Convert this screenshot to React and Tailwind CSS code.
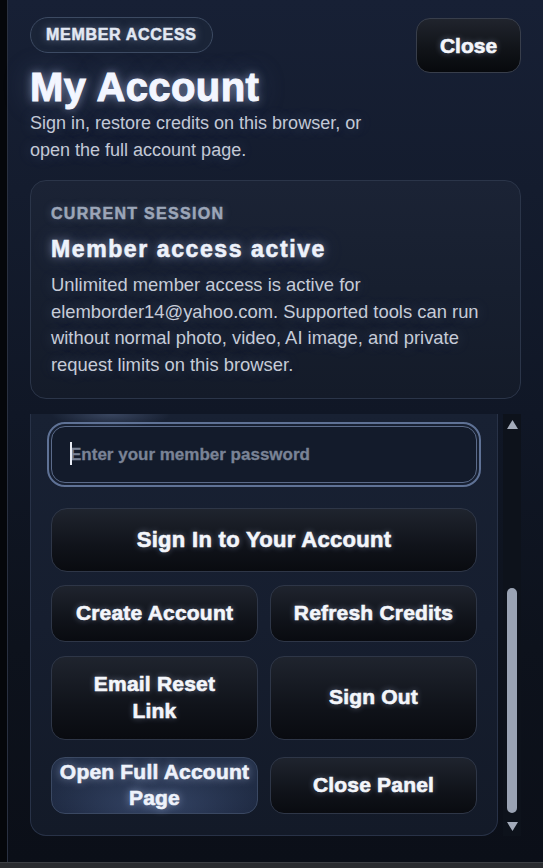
import React from "react";

const font = { fontFamily: '"Liberation Sans", Arial, sans-serif' };

function GridButton({ children, className = "" }) {
  return (
    <button
      className={
        "flex items-center justify-center rounded-[14px] border border-[#2e3647] bg-[linear-gradient(180deg,#1f242e_0%,#10131a_60%,#090b10_100%)] text-center text-[21px] font-bold leading-[1.27] tracking-[0.2px] text-[#f4f6fb] [-webkit-text-stroke:0.6px_#f4f6fb] [text-shadow:0_0_6px_rgba(200,215,255,0.45)] " +
        className
      }
    >
      {children}
    </button>
  );
}

export default function App() {
  return (
    <div style={font} className="flex h-[868px] w-[543px] flex-col overflow-hidden bg-black">
      <div className="flex h-[862px] w-full">
        <div className="h-full w-[7px] shrink-0 bg-[#05070b]" />
        <div className="flex h-full flex-1 flex-col border-l border-[#293040] bg-[linear-gradient(180deg,#172035_0%,#141c2e_22%,#101726_48%,#0d121c_75%,#0b0f18_100%)] pl-[22px] pr-[22px] pt-[17px]">
          {/* Header */}
          <div className="flex items-start justify-between">
            <div className="flex flex-col items-start">
              <div className="inline-flex h-[36px] items-center rounded-full border border-[#3c4a62] bg-[#1d2739]/70 px-[15px] text-[16px] font-bold tracking-[0.7px] text-[#e2e8f3] [-webkit-text-stroke:0.5px_#e2e8f3] [text-shadow:0_0_8px_rgba(200,215,255,0.5)]">
                MEMBER ACCESS
              </div>
              <h1 className="mt-[14px] text-[40px] font-bold leading-[40px] tracking-[0.4px] text-[#f3f6ff] [-webkit-text-stroke:1px_#f3f6ff] [text-shadow:0_0_10px_rgba(200,215,255,0.6),0_0_28px_rgba(150,170,220,0.35)]">
                My Account
              </h1>
              <p className="mt-[3px] w-[360px] text-[18px] leading-[27px] text-[#c3c9d6] [text-shadow:0_0_14px_rgba(150,170,220,0.3)]">
                Sign in, restore credits on this browser, or open the full account page.
              </p>
            </div>
            <button className="mt-[1px] flex h-[55px] w-[105px] items-center justify-center rounded-[14px] border border-[#383e4b] bg-[linear-gradient(180deg,#20242d_0%,#111419_55%,#07090d_100%)] text-[21px] font-bold text-[#f4f6fb] [-webkit-text-stroke:0.6px_#f4f6fb] [text-shadow:0_0_6px_rgba(200,215,255,0.45)]">
              Close
            </button>
          </div>

          {/* Session card */}
          <div className="mt-[16px] rounded-[16px] border border-[#2b3549] bg-[linear-gradient(180deg,#1b2335_0%,#171f2f_50%,#141b29_100%)] px-[20px] pb-[19px] pt-[23px]">
            <div className="text-[16px] font-bold uppercase leading-[20px] tracking-[1.3px] text-[#9ca6b8] [-webkit-text-stroke:0.5px_#9ca6b8] [text-shadow:0_0_8px_rgba(180,200,240,0.35)]">
              Current Session
            </div>
            <div className="mt-[11px] text-[23px] font-bold leading-[28px] tracking-[1.6px] text-[#eef2fb] [-webkit-text-stroke:0.6px_#eef2fb] [text-shadow:0_0_8px_rgba(200,215,255,0.55),0_0_22px_rgba(150,170,220,0.3)]">
              Member access active
            </div>
            <p className="mt-[9px] text-[18.4px] leading-[26.7px] text-[#c6ccd8] [text-shadow:0_0_14px_rgba(150,170,220,0.3)]">
              Unlimited member access is active for elemborder14@yahoo.com. Supported tools can run without normal photo, video, AI image, and private request limits on this browser.
            </p>
          </div>

          {/* Scroll area */}
          <div className="mt-[15px] flex h-[422px] items-stretch">
            <div className="h-full w-[468px] shrink-0 overflow-hidden">
              <div className="flex h-full flex-col rounded-b-[16px] border-x border-b border-[#283247] bg-[radial-gradient(ellipse_60px_14px_at_80px_0px,rgba(120,140,180,0.35),transparent),linear-gradient(180deg,#182133_0%,#161e2f_50%,#131a28_100%)] px-[20px]">
                <div className="relative mt-[12px] flex h-[57px] items-center rounded-[14px] border-[1.5px] border-[#5b6b8a] bg-[#131b2b] pl-[18px] outline-2 outline-offset-2 outline-[#5f7296]">
                  <span className="absolute left-[18px] top-[15px] h-[23px] w-[1.5px] bg-[#e8ecf5]" />
                  <span className="text-[17px] font-bold text-[#7a8396] [-webkit-text-stroke:0.3px_#7a8396]">Enter your member password</span>
                </div>
                <button className="mt-[25px] flex h-[64px] w-full items-center justify-center rounded-[16px] border border-[#2e3647] bg-[linear-gradient(180deg,#1f242e_0%,#10131a_60%,#090b10_100%)] text-[22px] font-bold tracking-[0.3px] text-[#f4f6fb] [-webkit-text-stroke:0.6px_#f4f6fb] [text-shadow:0_0_6px_rgba(200,215,255,0.45)]">
                  Sign In to Your Account
                </button>
                <div className="mt-[13px] grid grid-cols-2 gap-x-[12px]">
                  <GridButton className="h-[57px] px-2">Create Account</GridButton>
                  <GridButton className="h-[57px] px-2">Refresh Credits</GridButton>
                </div>
                <div className="mt-[14px] grid grid-cols-2 gap-x-[12px]">
                  <GridButton className="h-[84px] px-[30px]">Email Reset Link</GridButton>
                  <GridButton className="h-[84px] px-2">Sign Out</GridButton>
                </div>
                <div className="mt-[17px] grid grid-cols-2 gap-x-[12px]">
                  <button className="flex h-[57px] items-center justify-center rounded-[14px] border border-[#3a4862] bg-[radial-gradient(ellipse_110px_40px_at_50%_85%,rgba(70,90,130,0.55),transparent),linear-gradient(180deg,#24314a_0%,#1d2840_100%)] px-[6px] text-center text-[21px] font-bold leading-[1.27] tracking-[0.2px] text-[#eef2fb] [-webkit-text-stroke:0.6px_#eef2fb] [text-shadow:0_0_8px_rgba(200,215,255,0.65)]">
                    Open Full Account Page
                  </button>
                  <GridButton className="h-[57px] px-2">Close Panel</GridButton>
                </div>
              </div>
            </div>
            <div className="w-[5px] shrink-0" />
            <div className="flex h-full w-[18px] shrink-0 flex-col items-center bg-[#0d121b] pb-[5px] pt-[6px]">
              <svg width="11" height="9" viewBox="0 0 11 9">
                <path d="M5.5 0 L11 9 L0 9 Z" fill="#a3abba" />
              </svg>
              <div className="flex-1" />
              <div className="h-[225px] w-[10px] rounded-full bg-[#9aa3b4]" />
              <div className="h-[9px]" />
              <svg width="11" height="9" viewBox="0 0 11 9">
                <path d="M0 0 L11 0 L5.5 9 Z" fill="#a3abba" />
              </svg>
            </div>
          </div>
        </div>
      </div>
      <div className="h-[6px] w-full border-t border-[#3d4045] bg-[#2a2c30]" />
    </div>
  );
}
